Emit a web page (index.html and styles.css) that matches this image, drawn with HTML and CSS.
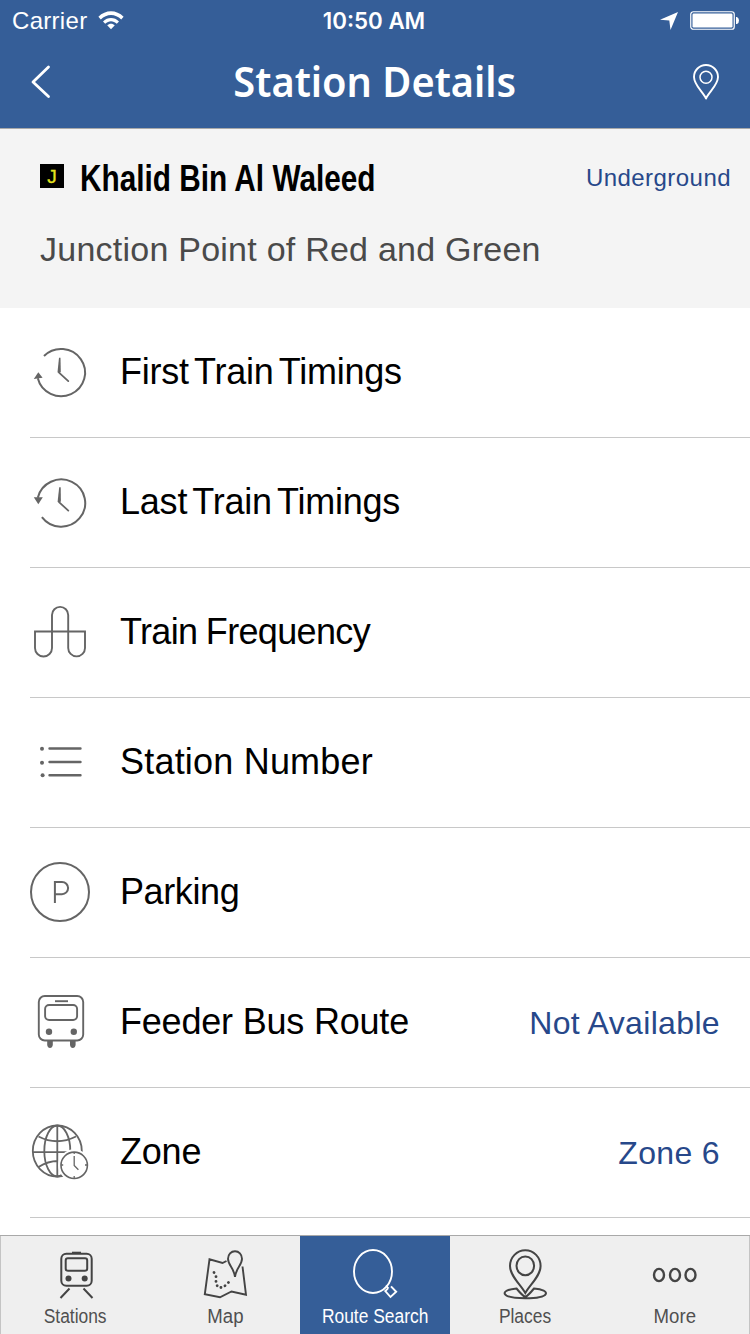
FILE: index.html
```html
<!DOCTYPE html>
<html lang="en">
<head>
<meta charset="utf-8">
<title>Station Details</title>
<link rel="stylesheet" href="styles.css">
</head>
<body>
<div class="app">
  <header class="top">
    <div class="status">
      <div class="status-left"><span class="carrier">Carrier</span>
        <svg class="wifi" width="26" height="20" viewBox="0 0 26 20"><path d="M.4 6.8C7.5-.6 18.5-.6 25.6 6.8L23.2 9.4C17.3 3.4 8.7 3.4 2.8 9.4ZM5 11.4C9.5 6.8 16.5 6.8 21 11.4L18.8 13.8C15.3 10.4 10.7 10.4 7.2 13.8ZM9.2 15.2C11.3 13.1 14.7 13.1 16.8 15.2L13 19.2Z" fill="#fff"/></svg>
      </div>
      <span class="clock">10:50 AM</span>
      <div class="status-right">
        <svg width="18" height="18" viewBox="0 0 18 18"><path d="M18 0 10.5 18 9.3 8.5 0 7.7Z" fill="#fff"/></svg>
        <svg width="50" height="20" viewBox="0 0 50 20"><rect x=".75" y=".75" width="43.5" height="17.5" rx="2.6" fill="none" stroke="#fff" stroke-width="1.2"/><rect x="2.5" y="2.5" width="40" height="14" rx="1.2" fill="#fff"/><path d="M46 6h1q2 1 2 3.5T47 13h-1Z" fill="#fff"/></svg>
      </div>
    </div>
    <div class="nav">
      <svg width="20" height="34" viewBox="0 0 20 34"><path d="M17.5 2 2 17 17.5 31.5" fill="none" stroke="#fff" stroke-width="2.8" stroke-linecap="round" stroke-linejoin="round"/></svg>
      <h1 class="title">Station Details</h1>
      <svg width="26" height="36" viewBox="0 0 26 36"><path d="M13 34.5C10 28 1 21 1 13a12 12 0 0 1 24 0C25 21 16 28 13 34.5Z" fill="none" stroke="#fff" stroke-width="1.9" stroke-linejoin="round"/><circle cx="13" cy="13.2" r="6" fill="none" stroke="#fff" stroke-width="1.5"/></svg>
    </div>
  </header>
  <section class="summary">
    <div class="summary-head">
      <span class="badge">J</span>
      <h2 class="station">Khalid Bin Al Waleed</h2>
      <span class="level">Underground</span>
    </div>
    <p class="junction">Junction Point of Red and Green</p>
  </section>
  <main class="list">
    <div class="row"><svg class="ico" viewBox="0.7 -0.8 60 60"><path d="M14.7 15.2A24 23.6 0 1 1 8.5 37.5" fill="none" stroke="#656565" stroke-width="2"/><path d="M4.5 38.2 9 31.5 13.3 37Z" fill="#656565"/><path d="M29.7 17h1.5l.3 14-1 1.2h-1.4l-.9-.7Z" fill="#656565"/><path d="M30 32 39 40.3" stroke="#656565" stroke-width="1.8" stroke-linecap="round"/></svg><span class="label tight">First Train Timings</span></div>
    <div class="row"><svg class="ico" viewBox="0.7 -0.3 60 60"><path d="M12.6 46.8A24 23.6 0 1 0 8.5 27.5" fill="none" stroke="#656565" stroke-width="2"/><path d="M4.5 27 9 34 13.5 27Z" fill="#656565"/><path d="M29.9 17h1.5l.2 14-1 1.2h-1.4l-.9-.7Z" fill="#656565"/><path d="M30 32 39 40.3" stroke="#656565" stroke-width="1.8" stroke-linecap="round"/></svg><span class="label tight">Last Train Timings</span></div>
    <div class="row"><svg class="ico" viewBox="0 0 60 60"><path d="M5 31.5H55V48a8.2 8.2 0 0 1-16.8 0V15a8.1 8.1 0 0 0-16.2 0V48a8.4 8.4 0 0 1-17 0Z" fill="none" stroke="#656565" stroke-width="1.9"/></svg><span class="label frequency">Train Frequency</span></div>
    <div class="row"><svg class="ico" viewBox="0 0 60 60"><path d="M19.5 18.5H50.5M19.5 32H50.5M19.5 45.3H50.5" stroke="#656565" stroke-width="2.4" stroke-linecap="round"/><g fill="#656565"><circle cx="12" cy="18.7" r="2"/><circle cx="12" cy="32.7" r="2"/><circle cx="12.6" cy="45.3" r="2"/></g></svg><span class="label number">Station Number</span></div>
    <div class="row"><svg class="ico" viewBox="0 0 60 60"><circle cx="30" cy="32" r="29" fill="none" stroke="#656565" stroke-width="2"/><path d="M24.9 43V22H32a6.1 6.1 0 0 1 0 12.2H25" fill="none" stroke="#656565" stroke-width="2"/></svg><span class="label parking">Parking</span></div>
    <div class="row"><svg class="ico" viewBox="0 0 60 60"><g fill="none" stroke="#656565" stroke-width="1.9"><rect x="8.8" y="6" width="44.4" height="44.5" rx="6"/><rect x="15.1" y="15" width="32" height="15" rx="4"/><path d="M25 11.2H38"/></g><g fill="#656565"><circle cx="19" cy="41.8" r="3.2"/><circle cx="43.8" cy="41.8" r="3.2"/><path d="M17.2 50h5.6v5q-.5 3-2.8 3t-2.8-3ZM40 50h5.6v5q-.5 3-2.8 3T40 55Z"/></g></svg><span class="label snug">Feeder Bus Route</span><span class="value">Not Available</span></div>
    <div class="row"><svg class="ico" viewBox="0 0 60 60"><g fill="none" stroke="#656565" stroke-width="1.8"><ellipse cx="27.3" cy="31" rx="24.5" ry="25.5"/><ellipse cx="27.3" cy="31" rx="13" ry="25.5"/><path d="M27.3 5.5v51M3 32.2H52M8.5 16.5Q27 26 46 16.5M8.5 47Q18 41 28 41"/></g><circle cx="44.2" cy="45.3" r="16" fill="#fff"/><circle cx="44.2" cy="45.3" r="13.2" fill="none" stroke="#656565" stroke-width="1.6"/><path d="M44.2 36v9.5l4.2 4.2M44.2 32v2M44.2 56v2M31.2 45h2M55 45h2" fill="none" stroke="#656565" stroke-width="1.3"/></svg><span class="label snug">Zone</span><span class="value">Zone 6</span></div>
  </main>
  <nav class="tabs">
    <div class="tab"><svg class="tico" viewBox="0 0 60 52"><g fill="none" stroke="#444" stroke-width="2"><rect x="15.3" y="4.8" width="30.4" height="32" rx="5"/><rect x="19.7" y="9.2" width="21.5" height="12.5" rx="2.2"/><path d="M23.5 39.5 14.5 49M37.5 39.5 46.5 49"/></g><path d="M26 2.7h9v2h-9Z" fill="#444"/><circle cx="22.5" cy="29.5" r="3" fill="#444"/><circle cx="38.7" cy="29.5" r="3" fill="#444"/></svg><span class="tlabel">Stations</span></div>
    <div class="tab"><svg class="tico" viewBox="0 0 60 52"><g fill="none" stroke="#444" stroke-width="1.9"><path d="M31.5 12 27.5 14 14.5 10.3 9.8 45.3 25 48.3 36.5 42.5 51 45.8 47.5 17.5"/><path d="M40 28C39 19 33 16 33 9.7a7 7.5 0 0 1 14 0C47 16 41 19 40 28Z"/></g><path d="M19 23.5 21 26.5V31 35L23.5 38.5H28L32 35 36 31" fill="none" stroke="#444" stroke-width="2.8" stroke-linecap="round" stroke-dasharray=".1 4.6"/></svg><span class="tlabel wide">Map</span></div>
    <div class="tab active"><svg class="tico" viewBox="0 0 60 52"><g fill="none" stroke="#fff" stroke-width="1.9"><ellipse cx="28" cy="22.5" rx="19" ry="21.5"/><path d="M46 37.3 51.2 42.8 45.5 48 40.3 42 43 39.4M41 36.5 43.5 39.5"/></g></svg><span class="tlabel">Route Search</span></div>
    <div class="tab"><svg class="tico" viewBox="0 0 60 52"><g fill="none" stroke="#444" stroke-width="2"><path d="M30.3 44C26 36 15 27 15 17a15.3 15.8 0 0 1 30.6 0C45.6 27 34.6 36 30.3 44Z"/><ellipse cx="30.3" cy="16.8" rx="8.8" ry="9.4"/><path d="M21.5 39.5C4 41 5 49.2 30.3 49.2S56.6 41 39 39.5C34.5 45 33 46.8 30.3 47.8 27.5 46.8 26 45 21.5 39.5Z"/></g></svg><span class="tlabel">Places</span></div>
    <div class="tab"><svg class="tico" viewBox="0 0 60 52"><g fill="none" stroke="#444" stroke-width="2.4"><ellipse cx="14" cy="26" rx="5" ry="6.1"/><ellipse cx="30" cy="26" rx="5" ry="6.1"/><ellipse cx="45.5" cy="26" rx="5" ry="6.1"/></g></svg><span class="tlabel wide">More</span></div>
  </nav>
</div>
</body>
</html>
```
FILE: styles.css
```css
* { box-sizing: border-box; margin: 0; padding: 0; }
body { background: #fff; font-family: "Liberation Sans", Arial, sans-serif; overflow: hidden; }
.app { width: 750px; height: 1334px; display: flex; flex-direction: column; }
svg { display: block; flex: none; overflow: visible; }
span, h1, h2, p { white-space: nowrap; }

.top { height: 129px; flex: none; background: #355e98; border-bottom: 1px solid #a9a9a9; color: #fff; }
.status { height: 40px; display: grid; grid-template-columns: 1fr auto 1fr; align-items: center; padding: 0 10px 0 12px; font-size: 24px; }
.status-left { display: flex; align-items: center; gap: 11px; }
.carrier { line-height: 28px; padding-top: 2px; letter-spacing: .3px; }
.clock { font-family: Inter, sans-serif; font-weight: 600; font-size: 22.3px; line-height: 26px; padding-top: 1px; margin-right: 4px; }
.status-right { display: flex; justify-content: flex-end; align-items: center; gap: 12px; padding-top: 1px; }
.nav { height: 88px; display: grid; grid-template-columns: 1fr auto 1fr; align-items: center; padding: 0 31px 4px 31px; }
.nav > svg:last-child { justify-self: end; }
.title { font: 600 41px/50px "Noto Sans", sans-serif; padding-bottom: 2px; transform: scaleX(.97); }

.summary { height: 179px; flex: none; background: #f4f4f4; padding: 28px 19px 0 40px; }
.summary-head { display: flex; height: 44px; align-items: center; }
.badge { width: 24px; height: 24px; margin: -6px 16px 0 0; background: #000; color: #e3e31f; font-size: 19px; line-height: 25px; text-align: center; -webkit-text-stroke: .3px #e3e31f; }
.station { font-size: 36px; line-height: 44px; transform: scaleX(.827); transform-origin: left; }
.level { margin-left: auto; padding-bottom: 2px; font-size: 24px; color: #27488a; letter-spacing: .45px; }
.junction { margin-top: 28px; font-size: 34px; line-height: 40px; color: #4a4a4a; letter-spacing: .24px; }

.list { flex: 1; min-height: 0; overflow: hidden; padding-left: 30px; }
.row { height: 130px; border-bottom: 1px solid #c8c8c8; display: flex; align-items: center; padding: 0 30px 2px 0; }
.ico { width: 60px; height: 60px; margin: -4px 30px 0 0; }
.label { font-size: 36px; line-height: 44px; color: #000; }
.tight { letter-spacing: -.22px; word-spacing: -4px; }
.frequency { letter-spacing: -.65px; word-spacing: -1px; }
.number { letter-spacing: .2px; }
.parking { letter-spacing: -.4px; }
.snug { letter-spacing: -.2px; }
.value { margin-left: auto; font-size: 32px; line-height: 40px; color: #27488a; padding-top: 2px; letter-spacing: .35px; }

.tabs { height: 99px; flex: none; display: grid; grid-template-columns: repeat(5, 1fr); background: #efefef; border-top: 1px solid #a9a9a9; }
.tab { display: flex; flex-direction: column; align-items: center; padding-top: 13px; color: #505050; }
.tab:first-child { border-left: 1px solid #c4c4c4; }
.tab:last-child { border-right: 1px solid #c4c4c4; }
.tab.active { background: #355e98; color: #fff; }
.tico { width: 60px; height: 52px; }
.tlabel { font-size: 20px; line-height: 24px; margin-top: 3px; transform: scaleX(.87); }
.wide { transform: scaleX(.93); }
```
